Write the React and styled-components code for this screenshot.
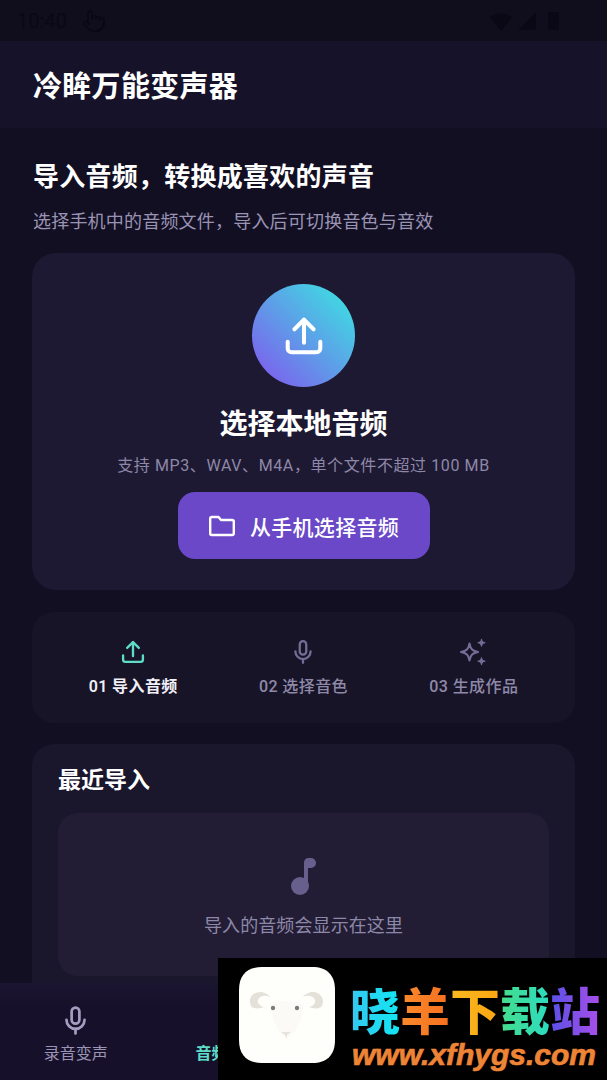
import styled, { createGlobalStyle } from 'styled-components';
import { Pointer } from 'lucide-react';

const GlobalStyle = createGlobalStyle`
  html, body {
    margin: 0;
    padding: 0;
    background: #130f23;
  }
  * {
    box-sizing: border-box;
  }
`;

function UploadIcon({ size, color, width = 2 }) {
  return (
    <svg width={size} height={size} viewBox="0 0 24 24" fill="none" stroke={color} strokeWidth={width} strokeLinecap="round" strokeLinejoin="round">
      <path d="M12 15.500V3.500" />
      <path d="M7 8.500l5-5 5 5" />
      <path d="M3.500 15v3.500a2 2 0 0 0 2 2h13a2 2 0 0 0 2-2V15" />
    </svg>
  );
}

function MicIcon({ size, color }) {
  return (
    <svg width={size} height={size} viewBox="0 0 24 24" fill="none" stroke={color} strokeWidth="2.1" strokeLinecap="round" strokeLinejoin="round">
      <rect x="9" y="2" width="6" height="12.500" rx="3" />
      <path d="M5 11.500a7 7 0 0 0 14 0" />
      <path d="M12 18.500v3.500" />
    </svg>
  );
}

function SparkIcon({ size, color }) {
  return (
    <svg width={size} height={size} viewBox="0 0 28 28" fill="none" stroke={color} strokeWidth="2" strokeLinejoin="round">
      <path d="M9.500 5.500c1 5.500 3 7.500 8.500 8.500-5.500 1-7.500 3-8.500 8.500-1-5.500-3-7.500-8.500-8.500 5.500-1 7.500-3 8.500-8.500z" />
      <path d="M21.500 1c.5 2.400 1.300 3.200 3.700 3.700-2.400.5-3.200 1.300-3.700 3.700-.5-2.400-1.300-3.200-3.700-3.700 2.400-.5 3.200-1.300 3.700-3.700z" fill={color} strokeWidth="1" />
      <path d="M21.500 19.500c.5 2.400 1.300 3.200 3.700 3.700-2.400.5-3.200 1.300-3.700 3.700-.5-2.400-1.300-3.200-3.700-3.700 2.400-.5 3.200-1.300 3.700-3.700z" fill={color} strokeWidth="1" />
    </svg>
  );
}

function FolderIcon() {
  return (
    <svg width="28" height="24" viewBox="0 0 28 24" fill="none" stroke="#fff" strokeWidth="2.400" strokeLinejoin="round">
      <path d="M2.200 4.500A1.500 1.500 0 0 1 3.700 3h6.800l2.500 3h11.300a1.500 1.500 0 0 1 1.500 1.500v12a1.500 1.500 0 0 1-1.500 1.500H3.700a1.500 1.500 0 0 1-1.500-1.500z" />
    </svg>
  );
}

function NoteIcon() {
  return (
    <svg width="25" height="37" viewBox="0 0 25 37" fill="#675f8c">
      <circle cx="9" cy="28" r="9" />
      <path d="M13 28V4.500A4.500 4.500 0 0 1 17.500 0H20a5 5 0 0 1 0 10h-3v18z" />
    </svg>
  );
}

function SheepLogo() {
  return (
    <svg width="98" height="98" viewBox="0 0 98 98">
      <path d="M24 1h50c15 0 23 8 23 23v50c0 15-8 23-23 23H24C9 97 1 89 1 74V24C1 9 9 1 24 1z" fill="#fefefa" />
      <path d="M13 40c-4-9 4-15 11-14 4 1 7 3 8 5-4-2-10-2-12 3-1 3 2 6 6 7-5 2-11 2-13-1z" fill="#e4e1d9" />
      <path d="M84 40c4-9-4-15-11-14-4 1-7 3-8 5 4-2 10-2 12 3 1 3-2 6-6 7 5 2 11 2 13-1z" fill="#e4e1d9" />
      <path d="M33 38c8-4 24-4 32 0 0 15-6 28-16 34-10-6-16-19-16-34z" fill="#fbfaf7" />
      <circle cx="35" cy="42" r="2.200" fill="#7c7c7c" />
      <circle cx="59" cy="42" r="2.200" fill="#7c7c7c" />
      <path d="M43 66h10l-4 3v4l-2-4z" fill="#e6e3dc" />
    </svg>
  );
}

export default function App() {
  return (
    <Screen>
      <GlobalStyle />
      <StatusBar>
        <StatusLeft>
          <StatusTime>10:40</StatusTime>
          <Pointer size={24} color="#0a0815" strokeWidth={2} />
        </StatusLeft>
        <svg width="72" height="24" viewBox="0 0 72 24" fill="#0a0815">
          <path d="M0 8.500C6 3 16 3 22 8.500L11 22z" />
          <path d="M28 21L46 3v18z" />
          <rect x="58" y="3" width="11" height="18" rx="2" />
        </svg>
      </StatusBar>
      <Header>
        <AppTitle>冷眸万能变声器</AppTitle>
      </Header>
      <Content>
        <Heading>导入音频，转换成喜欢的声音</Heading>
        <SubHeading>选择手机中的音频文件，导入后可切换音色与音效</SubHeading>
        <UploadCard>
          <UploadCircle>
            <UploadIcon size={46} color="#fff" width={2.1} />
          </UploadCircle>
          <UploadTitle>选择本地音频</UploadTitle>
          <UploadHint>支持 MP3、WAV、M4A，单个文件不超过 100 MB</UploadHint>
          <PickButton>
            <FolderIcon />
            从手机选择音频
          </PickButton>
        </UploadCard>
        <StepsCard>
          <Step>
            <StepIcon><UploadIcon size={28} color="#5fdcc6" /></StepIcon>
            <StepLabel $active>01 导入音频</StepLabel>
          </Step>
          <Step>
            <StepIcon><MicIcon size={26} color="#756d96" /></StepIcon>
            <StepLabel>02 选择音色</StepLabel>
          </Step>
          <Step>
            <StepIcon><SparkIcon size={28} color="#756d96" /></StepIcon>
            <StepLabel>03 生成作品</StepLabel>
          </Step>
        </StepsCard>
        <RecentCard>
          <RecentTitle>最近导入</RecentTitle>
          <EmptyBox>
            <NoteIcon />
            <EmptyText>导入的音频会显示在这里</EmptyText>
          </EmptyBox>
        </RecentCard>
      </Content>
      <BottomNav>
        <NavItem>
          <MicIcon size={31} color="#a49dc0" />
          <NavLabel>录音变声</NavLabel>
        </NavItem>
        <NavItem>
          <NavSpacer />
          <NavLabel $active>音频变声</NavLabel>
        </NavItem>
      </BottomNav>
      <Watermark>
        <SheepLogo />
        <WatermarkText>
          <BrandName>
            <BrandChar $from="#35c8f0" $to="#12e6f4">晓</BrandChar>
            <BrandChar $from="#f98a2c" $to="#f7701f">羊</BrandChar>
            <BrandChar $from="#fbb91e" $to="#f9a512">下</BrandChar>
            <BrandChar $from="#45dc8c" $to="#2cdcc0">载</BrandChar>
            <BrandChar $from="#5a50e8" $to="#a84fe8">站</BrandChar>
          </BrandName>
          <BrandUrl>www.xfhygs.com</BrandUrl>
        </WatermarkText>
      </Watermark>
    </Screen>
  );
}

const Screen = styled.div`
  position: relative;
  width: 607px;
  height: 1080px;
  overflow: hidden;
  background: #130f23;
  font-family: Roboto, "Noto Sans CJK SC", sans-serif;
  color: #fff;
`;

const StatusBar = styled.div`
  height: 41px;
  padding: 0 45px 0 17px;
  background: #100d1d;
  display: flex;
  align-items: center;
  justify-content: space-between;
`;

const StatusLeft = styled.div`
  display: flex;
  align-items: center;
  gap: 15px;
`;

const StatusTime = styled.div`
  font-size: 20px;
  color: #0a0815;
`;

const Header = styled.div`
  height: 87px;
  padding: 4px 0 0 33px;
  background: #16122a;
  display: flex;
  align-items: center;
`;

const AppTitle = styled.h1`
  margin: 0;
  font-size: 29px;
  font-weight: 700;
  line-height: 38px;
  letter-spacing: 0.3px;
`;

const Content = styled.div`
  padding: 30px 32px 0;
`;

const Heading = styled.h2`
  margin: 0;
  font-size: 26px;
  font-weight: 700;
  line-height: 38px;
  letter-spacing: 0.25px;
  padding-left: 1px;
`;

const SubHeading = styled.p`
  margin: 13px 0 0;
  font-size: 18px;
  line-height: 26px;
  letter-spacing: 0.2px;
  color: #9a94b4;
  padding-left: 1px;
`;

const UploadCard = styled.section`
  margin-top: 18px;
  height: 337px;
  padding-top: 31px;
  border-radius: 24px;
  background: #1e1932;
  display: flex;
  flex-direction: column;
  align-items: center;
`;

const UploadCircle = styled.div`
  width: 103px;
  height: 103px;
  border-radius: 50%;
  background: linear-gradient(to top right, #7c62ee 10%, #3fdbe2 90%);
  display: flex;
  align-items: center;
  justify-content: center;
`;

const UploadTitle = styled.h3`
  margin: 19px 0 0;
  font-size: 28px;
  font-weight: 700;
  line-height: 38px;
`;

const UploadHint = styled.p`
  margin: 11px 0 0;
  font-size: 16px;
  line-height: 22px;
  letter-spacing: 0.6px;
  color: #8e88a8;
`;

const PickButton = styled.button`
  margin-top: 15px;
  width: 252px;
  height: 67px;
  border: 0;
  border-radius: 17px;
  background: #6a48c8;
  color: #fff;
  font-family: inherit;
  font-size: 21px;
  font-weight: 500;
  letter-spacing: 0.3px;
  display: flex;
  align-items: center;
  justify-content: center;
  gap: 14px;
`;

const StepsCard = styled.section`
  margin-top: 22px;
  height: 111px;
  border-radius: 22px;
  background: #181428;
  padding: 0 16px;
  display: grid;
  grid-template-columns: repeat(3, 1fr);
`;

const Step = styled.div`
  display: flex;
  flex-direction: column;
  align-items: center;
  padding-top: 25px;
`;

const StepIcon = styled.div`
  height: 30px;
  display: flex;
  align-items: center;
  justify-content: center;
`;

const StepLabel = styled.div`
  margin-top: 8px;
  font-size: 16px;
  line-height: 24px;
  letter-spacing: 0.4px;
  font-weight: ${(p) => (p.$active ? 600 : 500)};
  color: ${(p) => (p.$active ? '#f1eff7' : '#8f89a8')};
`;

const RecentCard = styled.section`
  margin-top: 21px;
  height: 260px;
  border-radius: 22px;
  background: #1a162c;
  padding: 21px 26px 0;
`;

const RecentTitle = styled.h3`
  margin: 0;
  font-size: 23px;
  font-weight: 700;
  line-height: 32px;
`;

const EmptyBox = styled.div`
  margin-top: 16px;
  height: 163px;
  border-radius: 20px;
  background: #221d35;
  padding-top: 45px;
  display: flex;
  flex-direction: column;
  align-items: center;
`;

const EmptyText = styled.p`
  margin: 18px 0 0;
  font-size: 18px;
  line-height: 26px;
  letter-spacing: 0.1px;
  color: #8e88a8;
`;

const BottomNav = styled.nav`
  position: absolute;
  left: 0;
  right: 0;
  bottom: 0;
  height: 97px;
  background: linear-gradient(#1a1530, #17102b 25%);
  display: grid;
  grid-template-columns: repeat(4, 1fr);
`;

const NavItem = styled.div`
  display: flex;
  flex-direction: column;
  align-items: center;
  padding-top: 22px;
`;

const NavSpacer = styled.div`
  height: 31px;
`;

const NavLabel = styled.div`
  margin-top: 7px;
  font-size: 16px;
  line-height: 22px;
  font-weight: ${(p) => (p.$active ? 600 : 400)};
  color: ${(p) => (p.$active ? '#5fdcc6' : '#9a94b4')};
`;

const Watermark = styled.div`
  position: absolute;
  left: 218px;
  top: 958px;
  width: 389px;
  height: 122px;
  background: #000;
  padding: 8px 0 0 20px;
  display: flex;
  gap: 14px;
`;

const WatermarkText = styled.div`
  display: flex;
  flex-direction: column;
`;

const BrandName = styled.div`
  display: flex;
  font-size: 50px;
  font-weight: 900;
  line-height: 60px;
  margin-top: 17px;
`;

const BrandChar = styled.span`
  background: linear-gradient(to right, ${(p) => p.$from}, ${(p) => p.$to});
  -webkit-background-clip: text;
  background-clip: text;
  color: transparent;
`;

const BrandUrl = styled.div`
  font-family: "Liberation Sans", sans-serif;
  font-size: 30px;
  font-weight: 700;
  font-style: italic;
  line-height: 30px;
  margin-top: -3px;
  padding-left: 2px;
  color: #ee8436;
  -webkit-text-stroke: 0.7px #ee8436;
`;
